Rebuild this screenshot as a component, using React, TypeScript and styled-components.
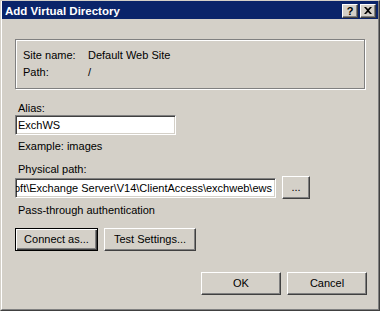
import styled, { createGlobalStyle } from 'styled-components'

const GlobalStyle = createGlobalStyle`
  body {
    margin: 0;
    font-family: "Liberation Sans", Arial, sans-serif;
    font-size: 11px;
    color: #000;
    background: #d4d0c8;
  }
`

const Frame = styled.div`
  width: 380px;
  height: 311px;
  box-sizing: border-box;
  border: 1px solid;
  border-color: #d4d0c8 #404040 #404040 #d4d0c8;
  background: #d4d0c8;
`
const Inner = styled.div`
  height: 100%;
  box-sizing: border-box;
  border-left: 1px solid #fff;
  border-right: 1px solid #808080;
  border-bottom: 1px solid #808080;
`
const TitleBar = styled.div`
  height: 18px;
  display: flex;
  align-items: center;
  padding: 1px 2px 0 3px;
  box-sizing: border-box;
  background: #0a246a;
`
const Title = styled.div`
  flex: 1;
  color: #fff;
  font-weight: bold;
  font-size: 11.5px;
  line-height: 14px;
`
const CaptionButton = styled.div<{ $gap?: boolean }>`
  width: 16px;
  height: 14px;
  box-sizing: border-box;
  margin-left: ${(p) => (p.$gap ? '2px' : '0')};
  display: flex;
  align-items: center;
  justify-content: center;
  background: #d4d0c8;
  border: 1px solid;
  border-color: #fff #404040 #404040 #fff;
  box-shadow: inset -1px -1px 0 #808080;
  font-weight: bold;
  font-size: 11px;
  line-height: 12px;
`
const Content = styled.div`
  padding: 20px 12px 0 13px;
`
const GroupBox = styled.div`
  height: 50px;
  margin-right: 1px;
  box-sizing: border-box;
  border: 1px solid #808080;
  box-shadow: 1px 1px 0 #fff, inset 1px 1px 0 #fff;
  padding: 7px 0 0 7px;
`
const InfoGrid = styled.div`
  display: grid;
  grid-template-columns: 65px auto;
  line-height: 17px;
`
const Label = styled.div<{ $top?: number }>`
  margin-top: ${(p) => p.$top ?? 0}px;
  padding-left: 3px;
  line-height: 13px;
`
const TextBox = styled.div<{ $width: number }>`
  width: ${(p) => p.$width}px;
  height: 20px;
  box-sizing: border-box;
  flex-shrink: 0;
  display: flex;
  overflow: hidden;
  white-space: nowrap;
  border: 1px solid;
  border-color: #808080 #fff #fff #808080;
  box-shadow: inset 1px 1px 0 #404040, inset -1px -1px 0 #d4d0c8;
  background: #fff;
  padding: 0 2px;
  line-height: 18px;
`
const ScrolledText = styled(TextBox)`
  justify-content: flex-end;
  padding-right: 3px;
`
const Row = styled.div<{ $top?: number; $end?: boolean }>`
  display: flex;
  align-items: center;
  gap: 6px;
  margin-top: ${(p) => p.$top ?? 0}px;
  justify-content: ${(p) => (p.$end ? 'flex-end' : 'flex-start')};
  margin-right: ${(p) => (p.$end ? '-1px' : '0')};
`
const Button = styled.div<{ $width: number; $default?: boolean }>`
  width: ${(p) => p.$width}px;
  height: 23px;
  box-sizing: border-box;
  display: flex;
  align-items: center;
  justify-content: center;
  background: #d4d0c8;
  border: 1px solid;
  border-color: ${(p) => (p.$default ? '#000' : '#fff #404040 #404040 #fff')};
  box-shadow: ${(p) =>
    p.$default
      ? 'inset 1px 1px 0 #fff, inset -1px -1px 0 #404040, inset -2px -2px 0 #808080'
      : 'inset -1px -1px 0 #808080'};
  padding-bottom: 1px;
`

const CloseGlyph = () => (
  <svg width="8" height="7" viewBox="0 0 8 7">
    <path d="M0 0h2l2 2 2-2h2L5 3.5 8 7H6L4 5 2 7H0l3-3.5z" fill="#000" />
  </svg>
)

export default function App() {
  return (
    <>
      <GlobalStyle />
      <Frame>
        <Inner>
          <TitleBar>
            <Title>Add Virtual Directory</Title>
            <CaptionButton>?</CaptionButton>
            <CaptionButton $gap>
              <CloseGlyph />
            </CaptionButton>
          </TitleBar>
          <Content>
            <GroupBox>
              <InfoGrid>
                <div>Site name:</div>
                <div>Default Web Site</div>
                <div>Path:</div>
                <div>/</div>
              </InfoGrid>
            </GroupBox>
            <Label $top={13}>Alias:</Label>
            <TextBox $width={161}>ExchWS</TextBox>
            <Label $top={5}>Example: images</Label>
            <Label $top={10}>Physical path:</Label>
            <Row>
              <ScrolledText $width={261}>
                C:\Program Files\Microsoft\Exchange Server\V14\ClientAccess\exchweb\ews
              </ScrolledText>
              <Button $width={28}>...</Button>
            </Row>
            <Label $top={5}>Pass-through authentication</Label>
            <Row $top={11}>
              <Button $width={83} $default>
                Connect as...
              </Button>
              <Button $width={92}>Test Settings...</Button>
            </Row>
            <Row $top={21} $end>
              <Button $width={80}>OK</Button>
              <Button $width={80}>Cancel</Button>
            </Row>
          </Content>
        </Inner>
      </Frame>
    </>
  )
}
